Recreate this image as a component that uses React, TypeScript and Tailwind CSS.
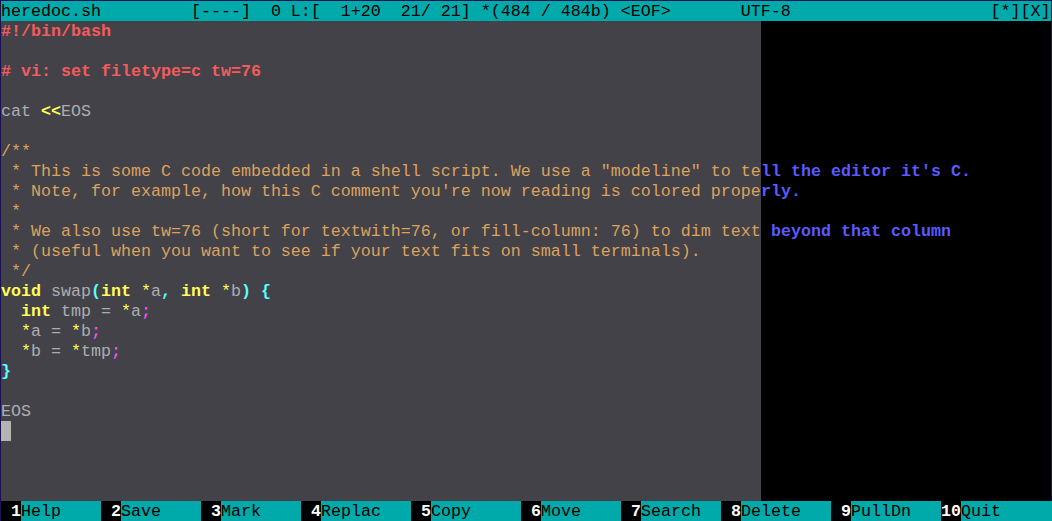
import React from "react";

type Seg = [string, string];

const GRAY = "text-[#adadad]";
const OR = "text-[#dca15e]";
const RED = "text-[#f45c5c] font-bold";
const YEL = "text-[#ffff55] font-bold";
const STAR = "text-[#ffff55]";
const CY = "text-[#55ffff] font-bold";
const MAG = "text-[#ff55ff]";
const BLUE = "text-[#5a5aff] font-bold";

const LINES: Seg[][] = [
  [["#!/bin/bash", RED]],
  [],
  [["# vi: set filetype=c tw=76", RED]],
  [],
  [["cat ", GRAY], ["<<", YEL], ["EOS", GRAY]],
  [],
  [["/**", OR]],
  [[' * This is some C code embedded in a shell script. We use a "modeline" to tell the editor it\'s C.', OR]],
  [[" * Note, for example, how this C comment you're now reading is colored properly.", OR]],
  [[" *", OR]],
  [[" * We also use tw=76 (short for textwith=76, or fill-column: 76) to dim text beyond that column", OR]],
  [[" * (useful when you want to see if your text fits on small terminals).", OR]],
  [[" */", OR]],
  [
    ["void", YEL], [" swap", GRAY], ["(", CY], ["int", YEL], [" ", GRAY], ["*", STAR], ["a", GRAY],
    [",", CY], [" ", GRAY], ["int", YEL], [" ", GRAY], ["*", STAR], ["b", GRAY], [")", CY], [" ", GRAY], ["{", CY],
  ],
  [["  ", GRAY], ["int", YEL], [" tmp = ", GRAY], ["*", STAR], ["a", GRAY], [";", MAG]],
  [["  ", GRAY], ["*", STAR], ["a = ", GRAY], ["*", STAR], ["b", GRAY], [";", MAG]],
  [["  ", GRAY], ["*", STAR], ["b = ", GRAY], ["*", STAR], ["tmp", GRAY], [";", MAG]],
  [["}", CY]],
  [],
  [["EOS", GRAY]],
];

const TW = 76;

// cut a line at the tw column; what lies beyond is drawn dimmed (blue)
function split(segs: Seg[]): [Seg[], Seg[]] {
  const left: Seg[] = [];
  const right: Seg[] = [];
  let col = 0;
  for (const [t, c] of segs) {
    if (col + t.length <= TW) {
      left.push([t, c]);
    } else if (col >= TW) {
      right.push([t, BLUE]);
    } else {
      const n = TW - col;
      left.push([t.slice(0, n), c]);
      right.push([t.slice(n), BLUE]);
    }
    col += t.length;
  }
  return [left, right];
}

const Row = ({ segs, cursor }: { segs: Seg[]; cursor?: boolean }) => {
  const [left, right] = split(segs);
  return (
    <div className="flex h-[20px]">
      <div className="flex w-[760px] shrink-0 bg-[#434249]">
        {cursor && <div className="w-[10px] h-[20px] bg-[#b4b4b4]"></div>}
        <div className="pt-[2px] leading-[18px] whitespace-pre">
          {left.map(([t, c], i) => (
            <span key={i} className={c}>
              {t}
            </span>
          ))}
        </div>
      </div>
      <div className="flex-1 bg-black pt-[2px] leading-[18px] whitespace-pre">
        {right.map(([t, c], i) => (
          <span key={i} className={c}>
            {t}
          </span>
        ))}
      </div>
    </div>
  );
};

const KEYS: [string, string, string][] = [
  ["1", "Help", "w-[100px]"],
  ["2", "Save", "w-[100px]"],
  ["3", "Mark", "w-[100px]"],
  ["4", "Replac", "w-[110px]"],
  ["5", "Copy", "w-[110px]"],
  ["6", "Move", "w-[100px]"],
  ["7", "Search", "w-[100px]"],
  ["8", "Delete", "w-[110px]"],
  ["9", "PullDn", "w-[110px]"],
  ["10", "Quit", "w-[110px]"],
];

const STATUS =
  "heredoc.sh         [----]  0 L:[  1+20  21/ 21] *(484 / 484b) <EOF>       UTF-8                    [*][X]";

export default function App() {
  const rows: Seg[][] = [];
  for (let i = 0; i < 24; i++) rows.push(LINES[i] || []);
  return (
    <div
      className="w-[1052px] h-[521px] bg-[#1c1150] pt-[1px] px-[1px] overflow-hidden text-[16.667px] leading-[20px]"
      style={{ fontFamily: '"Liberation Mono", "DejaVu Sans Mono", monospace' }}
    >
      <div className="h-[20px] bg-[#00aaaa] text-black pt-[2px] leading-[18px] whitespace-pre">{STATUS}</div>
      {rows.map((r, i) => (
        <Row key={i} segs={r} cursor={i === 20} />
      ))}
      <div className="flex h-[20px] bg-[#00aaaa] mr-[-1px] pt-0 leading-[18px]">
        {KEYS.map(([n, label, w]) => (
          <div key={n} className={`flex ${w} shrink-0`}>
            <span className="w-[20px] shrink-0 bg-black text-white font-bold text-right pt-[2px] whitespace-pre">{n}</span>
            <span className="flex-1 bg-[#00aaaa] text-black pt-[2px] whitespace-pre">{label}</span>
          </div>
        ))}
      </div>
    </div>
  );
}
